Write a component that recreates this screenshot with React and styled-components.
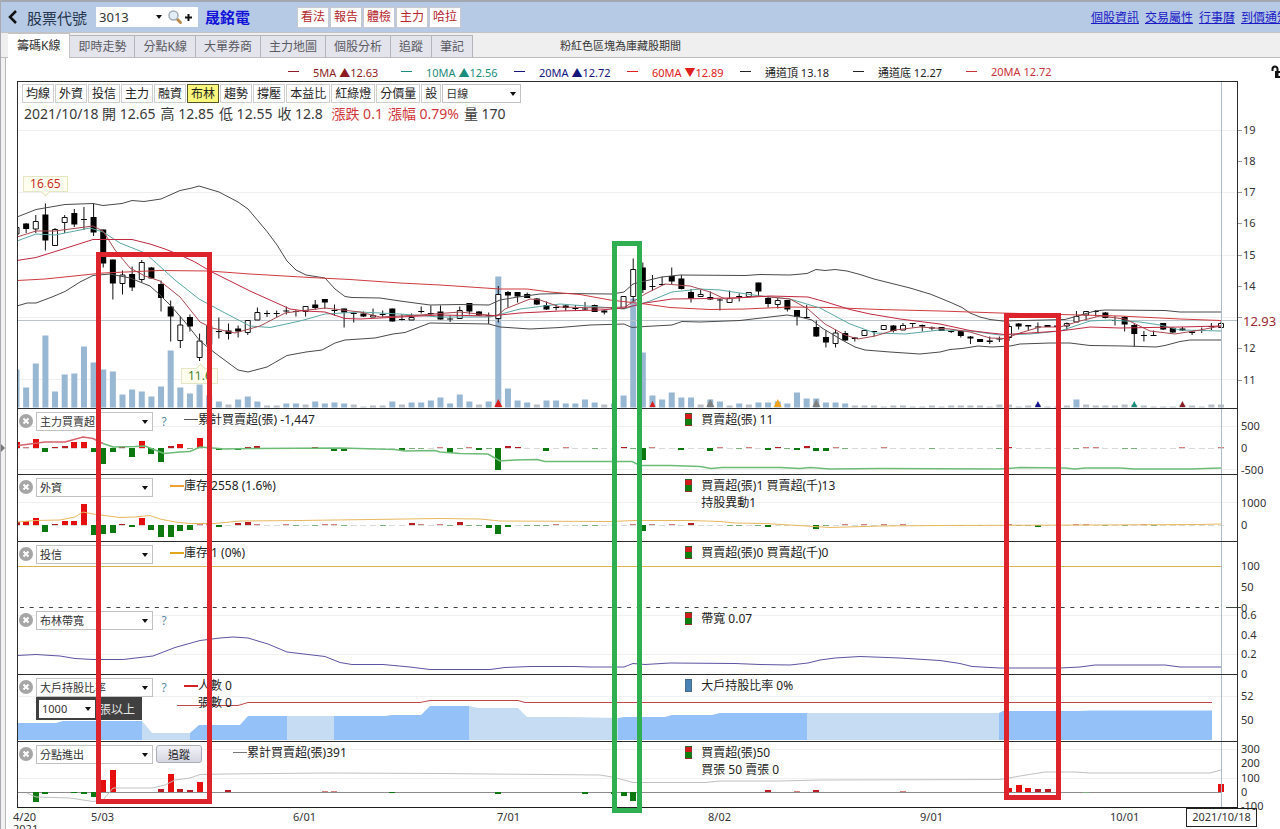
import React from "react"
import styled, { createGlobalStyle, css } from "styled-components"

const GlobalStyle = createGlobalStyle`
    *, *::before, *::after {
        box-sizing: border-box;
    }
    body {
        margin: 0;
        background: #fff;
        color: #222;
        font-family: "Noto Sans", "Noto Sans CJK TC", sans-serif;
        font-size: 12px;
    }
    button, select {
        margin: 0;
        font-family: inherit;
        font-size: inherit;
        color: inherit;
    }
`

const Page = styled.div`
    display: flex;
    flex-direction: column;
    height: 100vh;
    overflow: hidden;
    border-left: 1px solid #a9abb0;
`

/* ---------- header ---------- */

const Header = styled.header`
    display: flex;
    align-items: center;
    flex: none;
    height: 33px;
    padding-left: 7px;
    background: #b6cae6;
    border-top: 2px solid #a3a8b0;
    border-bottom: 1px solid #c3c3c6;
`
const IconButton = styled.button`
    display: flex;
    padding: 0;
    border: 0;
    background: none;
    color: #111;
`
const SymbolLabel = styled.label`
    margin: 0 9px;
    font-size: 15px;
    color: #26364f;
`
const SymbolBox = styled.div`
    display: flex;
    align-items: center;
    gap: 1px;
    width: 102px;
    height: 20px;
    padding-right: 2px;
    background: #fff;
`
const StockName = styled.h1`
    margin: 0 0 0 7px;
    width: 92px;
    font-size: 15px;
    line-height: 20px;
    color: #1414d8;
`
const TagList = styled.div`
    display: flex;
    gap: 1px;
`
const TagButton = styled.button`
    width: 32px;
    height: 21px;
    padding: 0;
    border: 1px solid #c9c9cf;
    background: #fff;
    color: #b5262b;
    line-height: 18px;
`
const HeaderNav = styled.nav`
    display: flex;
    flex: none;
    gap: 6px;
    margin: 0 -9px 0 auto;
    a {
        color: #1a1ac4;
    }
`

/* ---------- tabs ---------- */

const TabRow = styled.div`
    display: flex;
    align-items: flex-end;
    flex: none;
    height: 25px;
    padding-left: 7px;
    background: #efefef;
    border-bottom: 1px solid #bdbdbd;
`
const Tab = styled.button`
    height: 22px;
    padding: 0 8px;
    border: 1px solid #b4b4bb;
    border-width: 1px 1px 0 0;
    background: #e4e4ec;
    color: #5a5a62;
    line-height: 20px;
    white-space: nowrap;
    ${p => p.$active && css`
        height: 25px;
        margin-bottom: -1px;
        padding: 0 9px;
        background: #fff;
        color: #333;
        border-color: #c4c4c4;
    `}
`
const TabNote = styled.p`
    margin: 0 0 0 87px;
    align-self: center;
    font-size: 11px;
    color: #333;
`

/* ---------- body ---------- */

const Body = styled.div`
    display: flex;
    flex: 1;
    min-height: 0;
`
const Splitter = styled.div`
    display: flex;
    flex: none;
    width: 5px;
    padding-top: 386px;
    background: #f1f1f1;
    border-right: 1px solid #b9b9b9;
`
const Content = styled.main`
    flex: 1;
    min-width: 0;
`
const LegendRow = styled.div`
    display: flex;
    align-items: center;
    height: 23px;
    padding: 4px 0 0 282px;
`
const LegendItem = styled.div`
    display: flex;
    align-items: center;
    gap: 14px;
    width: 113px;
    font-size: 11px;
    color: ${p => p.$color};
    white-space: nowrap;
    &::before {
        content: "";
        width: 11px;
        height: 1px;
        background: currentColor;
    }
`
const LockButton = styled(IconButton)`
    margin: 0 -5px 0 auto;
`
const ChartStack = styled.div`
    position: relative;
    margin-left: 11px;
`
const Panel = styled.section`
    display: grid;
    grid-template-columns: minmax(0, 1fr) 42px;
`
const Plot = styled.div`
    display: grid;
    grid-template: ${p => p.$height}px / minmax(0, 1fr);
    border: 0 solid #2c2c2c;
    border-width: ${p => p.$open ? 0 : 1}px 1px 0 1px;
    > * {
        grid-area: 1 / 1;
    }
`
const PlotSvg = styled.svg`
    display: block;
    width: 100%;
    height: 100%;
    overflow: hidden;
    line, polyline, rect {
        vector-effect: non-scaling-stroke;
    }
`
const AxisSvg = styled.svg`
    display: block;
    width: 42px;
    overflow: visible;
    font-size: 11px;
    fill: #333;
`
const MainTools = styled.div`
    position: relative;
    padding: 2px 0 0 4px;
`
const ToolRow = styled.div`
    display: flex;
    gap: 1px;
`
const ToolButton = styled.button`
    height: 19px;
    padding: 0 3px;
    border: 1px solid ${p => p.$on ? "#55552a" : "#cfcfcf"};
    background: ${p => p.$on ? "#fbf67c" : "#fff"};
    line-height: 16px;
    white-space: nowrap;
`
const QuoteRow = styled.div`
    display: flex;
    gap: 5px;
    padding: 1px 0 0 2px;
    font-size: 14px;
    line-height: 20px;
    color: #3a3a3a;
    white-space: nowrap;
`
const Up = styled.span`
    color: #d2363a;
`

const SelectBox = styled.span`
    display: grid;
    flex: none;
    align-items: center;
    width: ${p => p.$width}px;
    height: ${p => p.$height || 19}px;
    border: ${p => p.$plain ? 0 : 1}px solid #c2c2c2;
    background: #fff;
    > * {
        grid-area: 1 / 1;
    }
    select {
        width: 100%;
        height: 100%;
        padding: 0 3px;
        border: 0;
        appearance: none;
        background: transparent;
        font-size: ${p => p.$size || 11}px;
        color: #333;
    }
    svg {
        justify-self: end;
        margin-right: 4px;
        pointer-events: none;
    }
`

const PanelHead = styled.div`
    position: relative;
    display: grid;
    grid-template-columns: 54.7% 1fr;
    align-items: start;
    padding: 2px 0 0 1px;
`
const PanelLeft = styled.div`
    display: flex;
    align-items: flex-start;
`
const CloseButton = styled(IconButton)`
    margin: 3px 3px 0 0;
`
const Controls = styled.div`
    display: flex;
    flex-direction: column;
    align-items: flex-start;
    padding-top: 1px;
`
const Help = styled.button`
    width: 14px;
    padding: 2px 0 0 8px;
    border: 0;
    background: none;
    color: #5c8aa6;
    font-size: 12px;
`
const LotFilter = styled.div`
    display: flex;
    align-items: center;
    gap: 4px;
    width: 106px;
    height: 23px;
    padding-left: 3px;
    background: #404040;
    color: #e6e6e6;
    white-space: nowrap;
`
const TrackButton = styled.button`
    width: 46px;
    height: 18px;
    margin: 1px 0 0 3px;
    padding: 0;
    border: 1px solid #a9adba;
    border-radius: 3px;
    background: linear-gradient(#f2f2f7, #d5d6e2);
    color: #222;
    font-size: 11px;
    line-height: 15px;
`
const Series = styled.div`
    display: flex;
    margin-left: ${p => p.$wide ? 31 : 17}px;
    line-height: 17px;
    white-space: nowrap;
    &::before {
        content: "";
        width: 14px;
        height: ${p => p.$thick || 1}px;
        margin-top: 8px;
        background: ${p => p.$color};
    }
`
const Reading = styled.div`
    display: flex;
    gap: 9px;
    line-height: 17px;
    white-space: nowrap;
    &::before {
        content: "";
        width: 7px;
        height: 13px;
        margin-top: 2px;
        border: 1px solid #4a4a4a66;
        background: ${p => p.$blue ? "#4682b4" : "linear-gradient(#d41a1a 50%, #0c800c 50%)"};
    }
`
const Line = styled.div`
    min-height: 17px;
`

const Callout = styled.span`
    position: absolute;
    left: ${p => p.$left}%;
    top: ${p => p.$top}px;
    width: ${p => p.$width}px;
    border: 1px solid #e6e6c4;
    background: #fffff0;
    color: ${p => p.$color};
    font-size: 12px;
    line-height: 14px;
    text-align: center;
    &::after {
        content: "";
        position: absolute;
        left: calc(50% - 3px);
        width: 7px;
        height: 7px;
        border: 1px solid #e6e6c4;
        border-width: 0 1px 1px 0;
        background: #fffff0;
        ${p => p.$up
            ? "top: -4px; transform: rotate(225deg);"
            : "bottom: -4px; transform: rotate(45deg);"}
    }
`
const Annotations = styled.div`
    position: absolute;
    inset: 0 42px 0 0;
    pointer-events: none;
`
const Frame = styled.div`
    position: absolute;
    left: ${p => p.$left}%;
    width: ${p => p.$width}%;
    top: ${p => p.$top}px;
    height: ${p => p.$height}px;
    border: 5px solid ${p => p.$color};
`

const DateAxis = styled.div`
    display: grid;
    grid-template-columns: 78fr 202fr 204fr 211fr 212fr 190fr 76fr 94fr;
    margin-left: 7px;
    font-size: 11px;
    line-height: 12px;
    color: #333;
`
const DateTick = styled.div`
    padding-top: 3px;
`
const CurrentDate = styled.div`
    justify-self: start;
    width: 71px;
    height: 19px;
    border: 1px solid #222;
    background: #fff;
    line-height: 16px;
    text-align: center;
`
const BottomRule = styled.div`
    height: 1px;
    margin-right: 42px;
    background: #1c1c1c;
`

/* ---------- data ---------- */

const X0 = 16.5
const STEP = 9.636
const x = i => X0 + i * STEP

// body top, body bottom, high, low, kind (f = falling, r = rising)
const candles = [
    [227.5, 234, 227, 234, "r"], [223.5, 229, 223, 233, "f"], [221.5, 229, 215, 233, "r"], [214.5, 240.5, 203.5, 250.5, "f"],
    [229.5, 245.5, 228, 245.5, "r"], [217.5, 222.5, 215, 233, "r"], [213, 224.5, 209, 227, "f"], [219, 220, 207, 230, "f"],
    [217, 232.5, 203.5, 236, "f"], [229.5, 263.5, 229.5, 267.5, "f"], [259.5, 283.5, 259.5, 299.5, "f"], [275, 283.5, 270.5, 294.5, "r"],
    [274, 287.5, 266.5, 291, "f"], [262.5, 279.5, 260, 282.5, "r"], [267.5, 278.5, 267, 278.5, "f"], [284, 298, 280.5, 311.5, "f"],
    [306.5, 316.5, 300.5, 341.5, "f"], [325, 340.5, 316.5, 348, "r"], [317, 326.5, 314.5, 331.5, "f"], [341, 357.5, 333.5, 361, "r"],
    [325.5, 344.5, 325.5, 344.5, "r"], [331, 332, 317.5, 338.5, "f"], [330.5, 334, 323.5, 339.5, "f"], [328.5, 331.5, 325.5, 337.5, "f"],
    [320.5, 332.5, 320, 335, "r"], [312.5, 320, 307.5, 320, "r"], [313, 314, 310.5, 317, "f"], [313, 314, 310.5, 317, "f"],
    [310.5, 311.5, 306.5, 314.5, "f"], [311, 312, 310, 316.5, "f"], [306.5, 311.5, 306, 316.5, "r"], [304.5, 308, 300, 310, "f"],
    [299, 302.5, 299, 309, "f"], [310, 311, 304.5, 315.5, "f"], [308.5, 312.5, 308.5, 327.5, "f"], [313, 314, 312, 322.5, "f"],
    [313.5, 316.5, 311.5, 317, "f"], [315.5, 317, 308.5, 317, "r"], [314, 315, 310.5, 317, "f"], [308.5, 321.5, 308.5, 321.5, "f"],
    [319, 320, 314, 320.5, "f"], [317.5, 320, 313.5, 320, "r"], [311, 312, 306.5, 313.5, "f"], [313, 314, 305.5, 316, "f"],
    [311.5, 319.5, 305.5, 319.5, "f"], [318.5, 319.5, 315.5, 322, "f"], [310.5, 318.5, 306.5, 318.5, "r"], [303, 311.5, 303, 314.5, "f"],
    [311.5, 315.5, 311, 316, "f"], [315, 316, 312.5, 324, "f"], [294.5, 318.5, 286, 322.5, "r"], [292, 295.5, 291, 307.5, "f"],
    [292, 296.5, 292, 302.5, "f"], [294, 298, 292.5, 298, "f"], [298.5, 304.5, 298, 305, "f"], [305, 309.5, 301.5, 310, "f"],
    [307, 308, 305, 310.5, "f"], [305.5, 308, 305, 311, "f"], [308, 309, 305, 311, "f"], [308.5, 309.5, 302, 310, "f"],
    [305, 312, 304.5, 312, "f"], [310.5, 312.5, 310, 314.5, "f"], [308, 309, 306, 311, "f"], [296.5, 308.5, 296, 309, "r"],
    [269.5, 296.5, 258.5, 302, "r"], [267.5, 290, 262.5, 293, "f"], [286, 287, 275, 290.5, "f"], [284, 285, 276.5, 285.5, "f"],
    [276, 281.5, 267.5, 284.5, "f"], [278.5, 289, 275, 289.5, "f"], [292, 298.5, 289, 302.5, "f"], [294.5, 296.5, 290, 296.5, "r"],
    [297, 299.5, 291.5, 300, "f"], [299.5, 300.5, 299, 310.5, "f"], [298.5, 302.5, 290.5, 302.5, "r"], [296, 297, 293.5, 301.5, "f"],
    [292.5, 296.5, 292, 297, "r"], [282.5, 291.5, 282.5, 296, "f"], [298, 304, 297, 307.5, "f"], [300.5, 304.5, 297.5, 308.5, "r"],
    [300, 309.5, 300, 311.5, "f"], [310, 317, 310, 325.5, "f"], [317, 318, 305, 318, "f"], [327, 336.5, 320.5, 337, "f"],
    [337, 342.5, 330.5, 347.5, "f"], [333, 343.5, 329.5, 347.5, "r"], [333, 340.5, 331, 341, "f"], [337.5, 339, 337, 341.5, "f"],
    [330.5, 335.5, 330, 336, "r"], [331, 332, 331, 336.5, "f"], [325.5, 329.5, 325, 330, "r"], [325.5, 331, 325, 332.5, "f"],
    [325.5, 330, 323, 330, "r"], [323, 324, 323, 327.5, "f"], [325, 326.5, 324.5, 331.5, "f"], [327.5, 328.5, 326.5, 330.5, "f"],
    [327, 331, 327, 331, "f"], [331, 332, 330, 333, "f"], [331, 336, 330, 337.5, "f"], [336.5, 338.5, 336, 344, "f"],
    [339, 342, 339, 342, "f"], [340.5, 342, 336.5, 344, "f"], [338.5, 339.5, 336.5, 342, "f"], [326.5, 337.5, 323.5, 341, "r"],
    [323.5, 326.5, 323, 329.5, "f"], [325, 326.5, 325, 330.5, "f"], [326.5, 327.5, 322.5, 333.5, "f"], [325, 327, 325, 327, "f"],
    [325.5, 327, 325, 327, "f"], [323.5, 326, 322.5, 330, "r"], [316.5, 322, 311, 322, "r"], [311.5, 315, 311, 320.5, "r"],
    [311, 312, 310, 316.5, "f"], [312.5, 318, 312, 318.5, "f"], [320, 321, 316, 325.5, "f"], [317, 324.5, 316, 331.5, "f"],
    [325, 334, 324, 346.5, "f"], [335, 336, 331, 341.5, "f"], [335, 336, 330.5, 336, "f"], [323, 329.5, 323, 330, "f"],
    [328, 332.5, 327, 333, "f"], [328.5, 330.5, 327, 331, "f"], [331.5, 333, 331, 335, "f"], [330, 331, 327.5, 333, "f"],
    [326, 327, 323, 330, "f"], [323.5, 327.5, 321.5, 328, "r"],
]

const volumes = [
    38, 20, 44, 72, 16, 33, 34, 61, 45, 38, 36, 13, 18, 16, 11, 21, 57, 20, 14, 23, 12, 6, 3, 8, 11, 6, 2, 2, 4, 4, 3, 6, 4,
    5, 4, 3, 1, 2, 2, 6, 3, 5, 5, 7, 10, 4, 13, 6, 3, 6, 131, 19, 7, 5, 3, 7, 7, 4, 4, 8, 5, 3, 4, 12, 109, 55,
    12, 8, 15, 10, 10, 3, 8, 6, 2, 4, 3, 5, 5, 6, 4, 15, 9, 9, 5, 5, 4, 2, 2, 2, 1, 2, 2, 1, 1, 2, 1, 2, 2, 2, 2, 1, 3, 3,
    1, 2, 3, 1, 1, 2, 8, 3, 2, 2, 2, 3, 3, 2, 1, 1, 1, 3, 2, 1, 3, 3,
]

const upperBand = "17,217 36,209.5 65,204.5 93,203.5 103,205.5 122,203.5 132,200.5 144,201.5 161,199 180,190.5 192,188 199,186 209,189 219,192 238,202 248,209 267,231.5 277,245 287,261 296,270 306,275 325,278 335,289 345,296.5 352,297.5 380,298 400,301 430,305 460,304.5 489,305 500,300 518,297 540,294 565,293.5 612,294 624,292 633,284 645,281 662,277 680,275 745,275.5 760,274.5 790,275 807,273.5 816,269.5 825,270.5 835,269.5 847,271 860,274.5 874,279 890,283 910,288 930,294 940,298 952,303 962,307.5 970,313 980,317 990,319.5 1003,321 1065,319.5 1079,315.5 1095,311 1105,310 1165,310.5 1180,312 1221,312"
const lowerBand = "17,306 27,303 36,303 52,297 65,291.5 80,282 93,275.5 110,274 130,278 150,286 160,295 171,306 185,322 200,341 215,353 238,370 248,372 267,367 287,355.5 306,352 322,350 335,343 345,340 375,338 393,334 405,332.5 430,323 489,324 500,327 530,329 560,327.5 590,325 624,324 632,327.5 645,326.5 672,325 682,321.5 700,322 740,320.5 787,315 800,317 812,320 822,328 842,340 855,347 865,350 890,352 920,354 940,352 950,349.5 962,348.5 978,346 992,347 1010,346 1020,344 1050,343 1070,343 1090,345.5 1125,346 1156,347 1165,345.5 1180,341.5 1190,340 1221,340"
const ma60 = "17,280.5 45,279 103,273 160,270.5 209,271 250,274 310,277.5 350,279.5 400,283 440,285 500,289 527,289 550,292 580,294.5 610,300 645,304 670,307.5 710,309.5 745,309 790,307 830,307.5 880,309.5 940,311 1000,313 1060,314.5 1120,316 1180,319 1221,320.5"
const ma20 = "17,260.5 36,257.5 60,250 93,239.5 132,239.5 150,244 165,249 180,255 195,262 210,271 230,281 250,291 270,300 290,309 305,311 325,312 345,318.5 360,319 400,317 440,315 490,316 520,313 560,311 600,310 624,308 645,303 672,299 710,298.5 745,297.5 770,296 808,297 826,302 850,309.5 870,314 900,319 940,324 970,330.5 990,333 1005,334.5 1030,333 1060,331 1090,327 1120,328 1150,327.5 1180,327 1221,326"
const ma10 = "17,241 36,234 55,235 90,228 103,232 120,243 145,253 155,262 175,280 199,299 225,313 250,326 270,327.5 300,321 325,314 360,312 400,314 440,317 490,317 520,309 560,304 600,307 624,309 650,301 672,292 700,289 720,290 760,296 790,299 820,308 850,324 875,333 905,334 940,330 970,331 1000,335 1030,334 1060,331 1090,321 1110,320 1140,322 1160,325 1180,330 1221,331"
const ma5 = "17,237 36,231 55,231 93,226 103,231 115,250 130,268 145,276 160,281 180,297 200,322 212,328 235,333 260,326 285,313 300,311 325,308 360,312 380,317 420,315 460,312 497,316 505,309 530,299 540,300 560,307 600,308 625,307 645,294 665,284 690,286 710,292 725,299 760,296 790,299 808,309 825,324 845,335 858,339 875,336 895,330 920,327 950,329 970,332 990,338 1005,338.5 1020,333 1040,327 1060,327 1080,321 1100,316 1125,319 1150,331 1175,334 1200,330 1221,326"

const signals = [
    [50, "#d81e1e", 4], [66, "#d81e1e", 3], [72, "#808080", 4], [79, "#f0a41c", 4],
    [83, "#808080", 4], [106, "#14148c", 3], [116, "#1c8c7c", 3], [121, "#8c1c24", 3],
]

// net buy (+) and net sell (-) per day
const majorNet = {
    0: 6, 1: 0.8, 2: 9, 3: -4, 4: 1.5, 5: 2.5, 6: 6.5, 7: 6, 8: -4, 9: -16, 10: -4, 11: 1.5, 12: -9, 13: 7.5, 14: -6, 15: -14,
    16: 2.5, 17: 4.5, 18: -0.8, 19: 10.5, 21: -2, 23: -2, 24: 1.5, 25: 2.5, 31: 1.5, 33: -3, 34: -3, 35: -0.8, 36: -0.8, 40: -2,
    41: -0.8, 42: -0.8, 44: 0.8, 45: -5, 46: -0.8, 47: 0.8, 48: -1.5, 49: -0.8, 50: -22, 51: 2.5, 52: 1.5, 55: -3, 57: 0.8,
    60: -0.8, 63: 1.5, 64: -0.8, 65: -12, 66: 0.8, 69: -1.5, 72: -3, 73: 0.8, 75: -0.8, 76: 0.8, 78: -1.5, 79: 1.5, 80: -0.8,
    81: -1.5, 82: 2.5, 83: -2.5, 84: -2.5, 85: 0.8, 86: -0.8, 90: 0.8, 95: -0.8, 102: -0.8, 103: 1.5, 110: -0.8, 111: 0.8,
    112: 0.8, 115: -0.8, 116: -0.8, 121: 0.8, 125: 0.8,
}
const foreignNet = {
    0: 3, 1: 4, 2: 7, 3: -7, 4: 1.5, 5: 4, 6: 4, 7: 21, 8: -9.5, 9: -8.5, 10: -7.5, 11: 1.5, 12: -1.5, 13: 7.5, 14: -4.5,
    15: -12, 16: -12, 17: -5.5, 18: -5, 19: 0.8, 20: 0.8, 21: -1.5, 23: 2, 24: 3, 25: 0.8, 28: 0.8, 29: -0.8, 31: -0.8,
    32: 0.8, 33: 0.8, 34: -0.8, 38: -0.8, 41: 2, 42: 0.8, 44: 0.8, 45: -0.8, 46: 3, 47: -0.8, 48: -0.8, 49: -2.5, 50: -8.5,
    51: -2, 53: -0.8, 54: -0.8, 55: -0.8, 56: 0.8, 59: -0.8, 60: -0.8, 64: 0.8, 65: -6, 66: 0.8, 68: 0.8, 70: 2.5, 74: -0.8,
    75: -0.8, 77: -0.8, 78: -1.5, 83: -4, 84: -0.8, 86: 0.8, 88: 0.8, 90: 0.8, 92: 0.8, 98: -0.8, 100: -0.8, 103: 0.8,
    104: -0.8, 105: -0.8, 106: -1.5, 110: 0.8, 111: 0.8, 113: -0.8, 115: -0.8, 117: 0.8, 118: -0.8,
}
const branchNet = {
    2: -10, 3: -2, 6: -1, 7: -1.5, 8: -5, 9: 12, 10: 22.5, 15: 3, 16: 18, 17: 3, 18: 2, 19: 10, 22: 2, 32: 0.8, 33: 0.8,
    39: -1, 50: -2, 59: -2, 62: -2, 63: -4, 64: -8.5, 78: 2, 81: 0.8, 83: 2, 92: 0.8, 103: 4, 104: 7, 105: 4, 106: 3,
    107: 3, 111: -0.8, 125: 8,
}

const holders = [
    ["#94c1f7", "17,723 56,723 63,721 142,721"],
    ["#c5dcf3", "142,721 152,733 190,733"],
    ["#94c1f7", "190,733 199,725 240,725 248,716 287,716"],
    ["#c5dcf3", "287,716 334,716"],
    ["#94c1f7", "334,716 385,716 392,715 421,715 430,706 469,706"],
    ["#c5dcf3", "469,706 478,708 518,708 527,717 570,717 618,718"],
    ["#94c1f7", "618,718 624,717 665,717 672,715 712,715 720,713 807,713"],
    ["#c5dcf3", "807,713 999,713"],
    ["#94c1f7", "999,713 1003,711 1080,711 1090,710.5 1212,710.5"],
]

const averages = [
    ["#8c1c24", "5MA ▲12.63"],
    ["#1c8c7c", "10MA ▲12.56"],
    ["#14147c", "20MA ▲12.72"],
    ["#e02020", "60MA ▼12.89"],
    ["#222", "通道頂 13.18"],
    ["#222", "通道底 12.27"],
    ["#c8323a", "20MA 12.72"],
]

const tabs = ["籌碼K線", "即時走勢", "分點K線", "大單券商", "主力地圖", "個股分析", "追蹤", "筆記"]
const tags = ["看法", "報告", "體檢", "主力", "哈拉"]
const links = ["個股資訊", "交易屬性", "行事曆", "到價通知"]
const tools = ["均線", "外資", "投信", "主力", "融資", "布林", "趨勢", "撐壓", "本益比", "紅綠燈", "分價量", "設"]

/* ---------- pieces ---------- */

const Select = ({ label, value, ...box }) => (
    <SelectBox {...box}>
        <select aria-label={label} defaultValue={value}>
            <option>{value}</option>
        </select>
        <svg width="6" height="4" viewBox="0 0 6 4"><path d="M0 0h6L3 4z" fill="#111" /></svg>
    </SelectBox>
)

const CloseIcon = () => (
    <svg width="14" height="14" viewBox="0 0 14 14">
        <circle cx="7" cy="7" r="7" fill="#a6a6a6" />
        <path d="M4.5 4.5l5 5m0-5l-5 5" stroke="#fff" strokeWidth="2" />
    </svg>
)

const Poly = ({ points, color, width = 1 }) => (
    <polyline points={points} fill="none" stroke={color} strokeWidth={width} />
)

const Grid = ({ at }) => at.map(y => (
    <line key={y} x1="18" x2="1237" y1={y} y2={y} stroke="#f0f0f0" />
))

const Cursor = () => <line x1="1221.5" x2="1221.5" y1="0" y2="829" stroke="#aebccb" />

const Bars = ({ data, zero, dashes }) => (
    <g shapeRendering="crispEdges">
        {dashes && candles.map((c, i) => (
            <rect key={"d" + i} x={x(i) - 3} y={zero} width="6" height="1" fill="#d6dbd6" />
        ))}
        {Object.keys(data).map(i => {
            const v = data[i]
            const h = Math.max(Math.abs(v), 1)
            const thin = Math.abs(v) < 1
            const fill = v > 0 ? (thin ? "#d88080" : h < 4 ? "#b81c22" : "#e60f0f") : (thin ? "#7cb07c" : "#0c780f")
            return <rect key={i} x={x(Number(i)) - 3} y={v > 0 ? zero - h : zero} width="6" height={h} fill={fill} />
        })}
    </g>
)

const Candle = ({ i, c }) => {
    const [top, bottom, high, low, kind] = c
    return (
        <g>
            <line x1={x(i)} x2={x(i)} y1={high} y2={low} stroke="#111" />
            {kind === "f"
                ? <rect x={x(i) - 3} y={top} width="6" height={bottom - top} fill="#000" />
                : <rect x={x(i) - 2.5} y={top} width="5" height={bottom - top} fill="#fff" stroke="#111" />}
        </g>
    )
}

const ChartPanel = ({ top, height, ticks = [], open, axis, svg, children }) => {
    const edge = open ? 0 : 1
    return (
        <Panel>
            <Plot $height={height} $open={open}>
                <PlotSvg viewBox={`18 ${top} 1219 ${height}`} preserveAspectRatio="none" aria-hidden="true">
                    {svg}
                    <Cursor />
                </PlotSvg>
                {children}
            </Plot>
            <AxisSvg height={height + edge} viewBox={`1238 ${top - edge} 42 ${height + edge}`}>
                {ticks.map(([label, y]) => <text key={label} x="1241" y={y + 4}>{label}</text>)}
                {axis}
            </AxisSvg>
        </Panel>
    )
}

const MainChart = () => (
    <ChartPanel
        top={82}
        height={326}
        svg={<>
            <Grid at={[130.5, 192.5, 255.5, 317.5, 379.5]} />
            {volumes.map((v, i) => (
                <rect key={i} x={x(i) - 3} y={407.5 - v} width="6" height={v} fill={v < 4 ? "#b9c0c8" : "#98b7d3"} />
            ))}
            <line x1="18" x2="1237" y1="320.5" y2="320.5" stroke="#b9c3ca" />
            {candles.map((c, i) => <Candle key={i} i={i} c={c} />)}
            <Poly points={upperBand} color="#4a4a4a" />
            <Poly points={lowerBand} color="#4a4a4a" />
            <Poly points={ma60} color="#cf3b40" />
            <Poly points={ma10} color="#5aa8a4" />
            <Poly points={ma5} color="#a84850" />
            <Poly points={ma20} color="#c02840" />
            {signals.map(([i, color, r]) => (
                <path key={i} d={`M${x(i)} ${408 - r * 2 - 1}l${r} ${r * 2}h${-r * 2}z`} fill={color} />
            ))}
        </>}
        axis={<>
            {[19, 18, 17, 16, 15, 14, 12, 11].map(p => {
                const y = Math.floor(255 + (15 - p) * 31.25)
                return (
                    <g key={p}>
                        <line x1="1238" x2="1242" y1={y + 0.5} y2={y + 0.5} stroke="#999" />
                        <text x="1243" y={y + 4}>{p}</text>
                    </g>
                )
            })}
            <line x1="1238" x2="1242" y1="317.5" y2="317.5" stroke="#999" />
            <text x="1243" y="326" fontSize="13" fill="#a02a34">12.93</text>
        </>}
    >
        <MainTools>
            <ToolRow>
                {tools.map(t => <ToolButton key={t} $on={t === "布林"} type="button">{t}</ToolButton>)}
                <Select label="週期" value="日線" $width={79} />
            </ToolRow>
            <QuoteRow>
                <span>2021/10/18 開 12.65</span>
                <span>高 12.85</span>
                <span>低 12.55</span>
                <span>收 12.8</span>
                <Up>&nbsp;漲跌 0.1</Up>
                <Up>漲幅 0.79%</Up>
                <span>量 170</span>
            </QuoteRow>
            <Callout $left={0.4} $top={94} $width={45} $color="#c8321e">16.65</Callout>
            <Callout $left={13.4} $top={286} $width={37} $color="#3f7f2a" $up>11.6</Callout>
        </MainTools>
    </ChartPanel>
)

const Head = ({ name, help, extra, lots, series, seriesColor, thick, wide, reading, blue }) => (
    <PanelHead>
        <PanelLeft>
            <CloseButton type="button" aria-label="關閉"><CloseIcon /></CloseButton>
            <Controls>
                <Select label="指標" value={name} $width={117} />
                {lots && (
                    <LotFilter>
                        <Select label="張數" value="1000" $width={56} $height={18} $plain />
                        <span>張以上</span>
                    </LotFilter>
                )}
            </Controls>
            {help && <Help type="button">?</Help>}
            {extra && <TrackButton type="button">{extra}</TrackButton>}
            {series && (
                <Series $color={seriesColor} $thick={thick} $wide={wide}>
                    <div>{series.map(s => <Line key={s}>{s}</Line>)}</div>
                </Series>
            )}
        </PanelLeft>
        <Reading $blue={blue}>
            <div>{reading.map(r => <Line key={r}>{r}</Line>)}</div>
        </Reading>
    </PanelHead>
)

const App = () => (
    <Page>
        <GlobalStyle />
        <Header>
            <IconButton type="button" aria-label="返回">
                <svg width="10" height="14" viewBox="0 0 10 14"><path d="M8 1L2 7l6 6" fill="none" stroke="currentColor" strokeWidth="2.5" /></svg>
            </IconButton>
            <SymbolLabel htmlFor="symbol">股票代號</SymbolLabel>
            <SymbolBox>
                <SelectBox $width={70} $plain $size={13}>
                    <select id="symbol" defaultValue="3013"><option>3013</option></select>
                    <svg width="6" height="4" viewBox="0 0 6 4"><path d="M0 0h6L3 4z" fill="#111" /></svg>
                </SelectBox>
                <IconButton type="button" aria-label="搜尋">
                    <svg width="16" height="16" viewBox="0 0 16 16">
                        <path d="M9.5 9.5l4 4" stroke="#b98a4a" strokeWidth="3" strokeLinecap="round" />
                        <circle cx="6.5" cy="6.5" r="4.5" fill="#e3eef6" stroke="#a3adb5" strokeWidth="1.5" />
                    </svg>
                </IconButton>
                <IconButton type="button" aria-label="新增">
                    <svg width="9" height="9" viewBox="0 0 9 9"><path d="M4.5 1v7M1 4.5h7" stroke="#111" strokeWidth="2" /></svg>
                </IconButton>
            </SymbolBox>
            <StockName>晟銘電</StockName>
            <TagList>
                {tags.map(t => <TagButton key={t} type="button">{t}</TagButton>)}
            </TagList>
            <HeaderNav>
                {links.map(l => <a key={l} href="#">{l}</a>)}
            </HeaderNav>
        </Header>
        <TabRow>
            {tabs.map((t, i) => <Tab key={t} type="button" $active={i === 0}>{t}</Tab>)}
            <TabNote>粉紅色區塊為庫藏股期間</TabNote>
        </TabRow>
        <Body>
            <Splitter>
                <svg width="4" height="8" viewBox="0 0 4 8"><path d="M0 0l4 4-4 4z" fill="#777" /></svg>
            </Splitter>
            <Content>
                <LegendRow>
                    {averages.map(([color, text], i) => <LegendItem key={i} $color={color}>{text}</LegendItem>)}
                    <LockButton type="button" aria-label="鎖定">
                        <svg width="14" height="14" viewBox="0 0 14 14">
                            <path d="M1.5 6V4a2.5 2.5 0 0 1 5 0v3" fill="none" stroke="#111" strokeWidth="2" />
                            <rect x="4" y="6" width="9" height="7" fill="#111" />
                            <rect x="7.5" y="8" width="2" height="3" fill="#fff" />
                        </svg>
                    </LockButton>
                </LegendRow>
                <ChartStack>
                    <MainChart />
                    <ChartPanel
                        top={409}
                        height={65}
                        ticks={[["500", 426], ["0", 448], ["-500", 470]]}
                        svg={<>
                            <Grid at={[426.5, 469.5]} />
                            <Bars data={majorNet} zero={448} dashes />
                            <Poly color="#d8606c" width={1.5} points="17,445.5 30,444 45,442 65,442 83,437 93,438.5 103,443.5" />
                            <Poly color="#6cbc78" width={1.5} points="103,443.5 113,447 135,446.5 145,446 155,450 164,453.5 180,452 190,451.5 200,447 225,449 250,448.5 340,448 395,449.5 405,451 435,450.5 440,452 460,453.5 488,454 500,461 515,460 537,459.5 545,461.5 632,461.5 640,465.5 670,465.5 700,466.5 711,468.5 722,467.5 780,467.5 800,468.5 810,467.5 830,469 880,468.5 1000,469 1020,467.5 1065,468 1075,469 1085,468 1120,468 1135,469 1190,469 1221,468" />
                        </>}
                    >
                        <Head name="主力買賣超" help series={["累計買賣超(張) -1,447"]} seriesColor="#555" reading={["買賣超(張) 11"]} />
                    </ChartPanel>
                    <ChartPanel
                        top={475}
                        height={66}
                        ticks={[["1000", 503], ["0", 525]]}
                        svg={<>
                            <Grid at={[502.5]} />
                            <Bars data={foreignNet} zero={525} dashes />
                            <Poly color="#e8b860" points="17,522 36,520.5 60,520 75,517 83,512 93,514 120,517.5 135,517 150,515.5 160,519 175,522 190,523.5 215,523.5 240,521 300,520.5 405,519 440,518.5 480,519 500,521 610,521.5 635,520.5 690,520.5 720,521.5 735,523 765,523.5 790,525 830,527.5 880,526 940,525.5 1090,525 1200,524.5 1221,524" />
                        </>}
                    >
                        <Head name="外資" series={["庫存 2558 (1.6%)"]} seriesColor="#f0a030" thick={2} reading={["買賣超(張)1 買賣超(千)13", "持股異動1"]} />
                    </ChartPanel>
                    <ChartPanel
                        top={542}
                        height={66}
                        ticks={[["100", 566], ["50", 587], ["0", 608]]}
                        svg={<>
                            <Poly color="#dcb450" points="17,566.5 1221,566.5" />
                            <line x1="20" x2="1221" y1="607.5" y2="607.5" stroke="#3c463c" strokeDasharray="4 5.636" />
                            <line x1="1226" x2="1237" y1="607.5" y2="607.5" stroke="#3c463c" />
                        </>}
                        axis={<line x1="1238" x2="1241" y1="607.5" y2="607.5" stroke="#3c463c" />}
                    >
                        <Head name="投信" series={["庫存 1 (0%)"]} seriesColor="#e0a818" thick={2} reading={["買賣超(張)0 買賣超(千)0"]} />
                    </ChartPanel>
                    <ChartPanel
                        top={608}
                        height={66}
                        open
                        ticks={[["0.6", 615], ["0.4", 635], ["0.2", 654], ["0", 674]]}
                        svg={<>
                            <Grid at={[615.5, 654.5]} />
                            <Poly color="#5c54a4" points="17,655.5 36,654.5 60,656 75,658.5 93,659.5 123,659.5 153,656 175,647.5 200,640.5 220,638 233,637 248,638 268,644 287,652 325,656.5 340,662.5 352,664.5 383,664.5 410,667 430,669.5 490,669.5 505,667.5 530,666.5 575,666.5 590,667 624,667 633,663.5 645,664.5 670,663 735,663.5 760,664.5 790,665 808,663 820,660 835,658 860,656.5 900,658 940,660.5 960,663.5 972,666.5 1000,668 1060,668 1080,667 1095,665 1165,665 1180,667 1221,667" />
                        </>}
                    >
                        <Head name="布林帶寬" help reading={["帶寬 0.07"]} />
                    </ChartPanel>
                    <ChartPanel
                        top={675}
                        height={66}
                        ticks={[["52", 696], ["50", 720]]}
                        svg={<>
                            <Grid at={[696.5]} />
                            {holders.map(([fill, pts]) => {
                                const list = pts.split(" ")
                                const first = list[0].split(",")[0]
                                const last = list[list.length - 1].split(",")[0]
                                return <polygon key={pts} fill={fill} points={`${first},740 ${pts} ${last},740`} />
                            })}
                            <Poly color="#c0484c" points="177,705.5 238,705.5 248,702.5 420,702.5 430,700.5 518,700.5 525,702.5 1212,702.5" />
                        </>}
                    >
                        <Head name="大戶持股比率" help lots series={["人數 0", "張數 0"]} seriesColor="#d42027" thick={2} reading={["大戶持股比率 0%"]} blue />
                    </ChartPanel>
                    <ChartPanel
                        top={742}
                        height={65}
                        ticks={[["300", 749], ["200", 763], ["100", 778], ["0", 792], ["-100", 806]]}
                        svg={<>
                            <Grid at={[749.5, 778.5]} />
                            <line x1="18" x2="1221" y1="792.5" y2="792.5" stroke="#8c8c8c" />
                            <Bars data={branchNet} zero={792} />
                            <Poly color="#c0c0c0" points="27,793 36,797 70,798 93,801.5 103,800 113,788 152,788 165,785 175,780 190,778 200,774.5 225,774 325,773 440,773.5 490,774 600,775 612,777 624,780 633,782.5 705,782.5 720,781 780,781 820,780 1000,779.5 1020,776 1045,772 1075,772 1090,773 1210,773 1221,770" />
                        </>}
                    >
                        <Head name="分點進出" extra="追蹤" series={["累計買賣超(張)391"]} seriesColor="#777" wide reading={["買賣超(張)50", "買張 50 賣張 0"]} />
                    </ChartPanel>
                    <BottomRule />
                    <Annotations>
                        <Frame $left={6.5} $width={9.5} $top={171} $height={552} $color="#dd232b" />
                        <Frame $left={48.7} $width={2.5} $top={160} $height={572} $color="#2fae52" />
                        <Frame $left={80.8} $width={4.7} $top={232} $height={487} $color="#dd232b" />
                    </Annotations>
                </ChartStack>
                <DateAxis>
                    <DateTick>4/20<br />2021</DateTick>
                    <DateTick>5/03</DateTick>
                    <DateTick>6/01</DateTick>
                    <DateTick>7/01</DateTick>
                    <DateTick>8/02</DateTick>
                    <DateTick>9/01</DateTick>
                    <DateTick>10/01</DateTick>
                    <CurrentDate>2021/10/18</CurrentDate>
                </DateAxis>
            </Content>
        </Body>
    </Page>
)

export default App
